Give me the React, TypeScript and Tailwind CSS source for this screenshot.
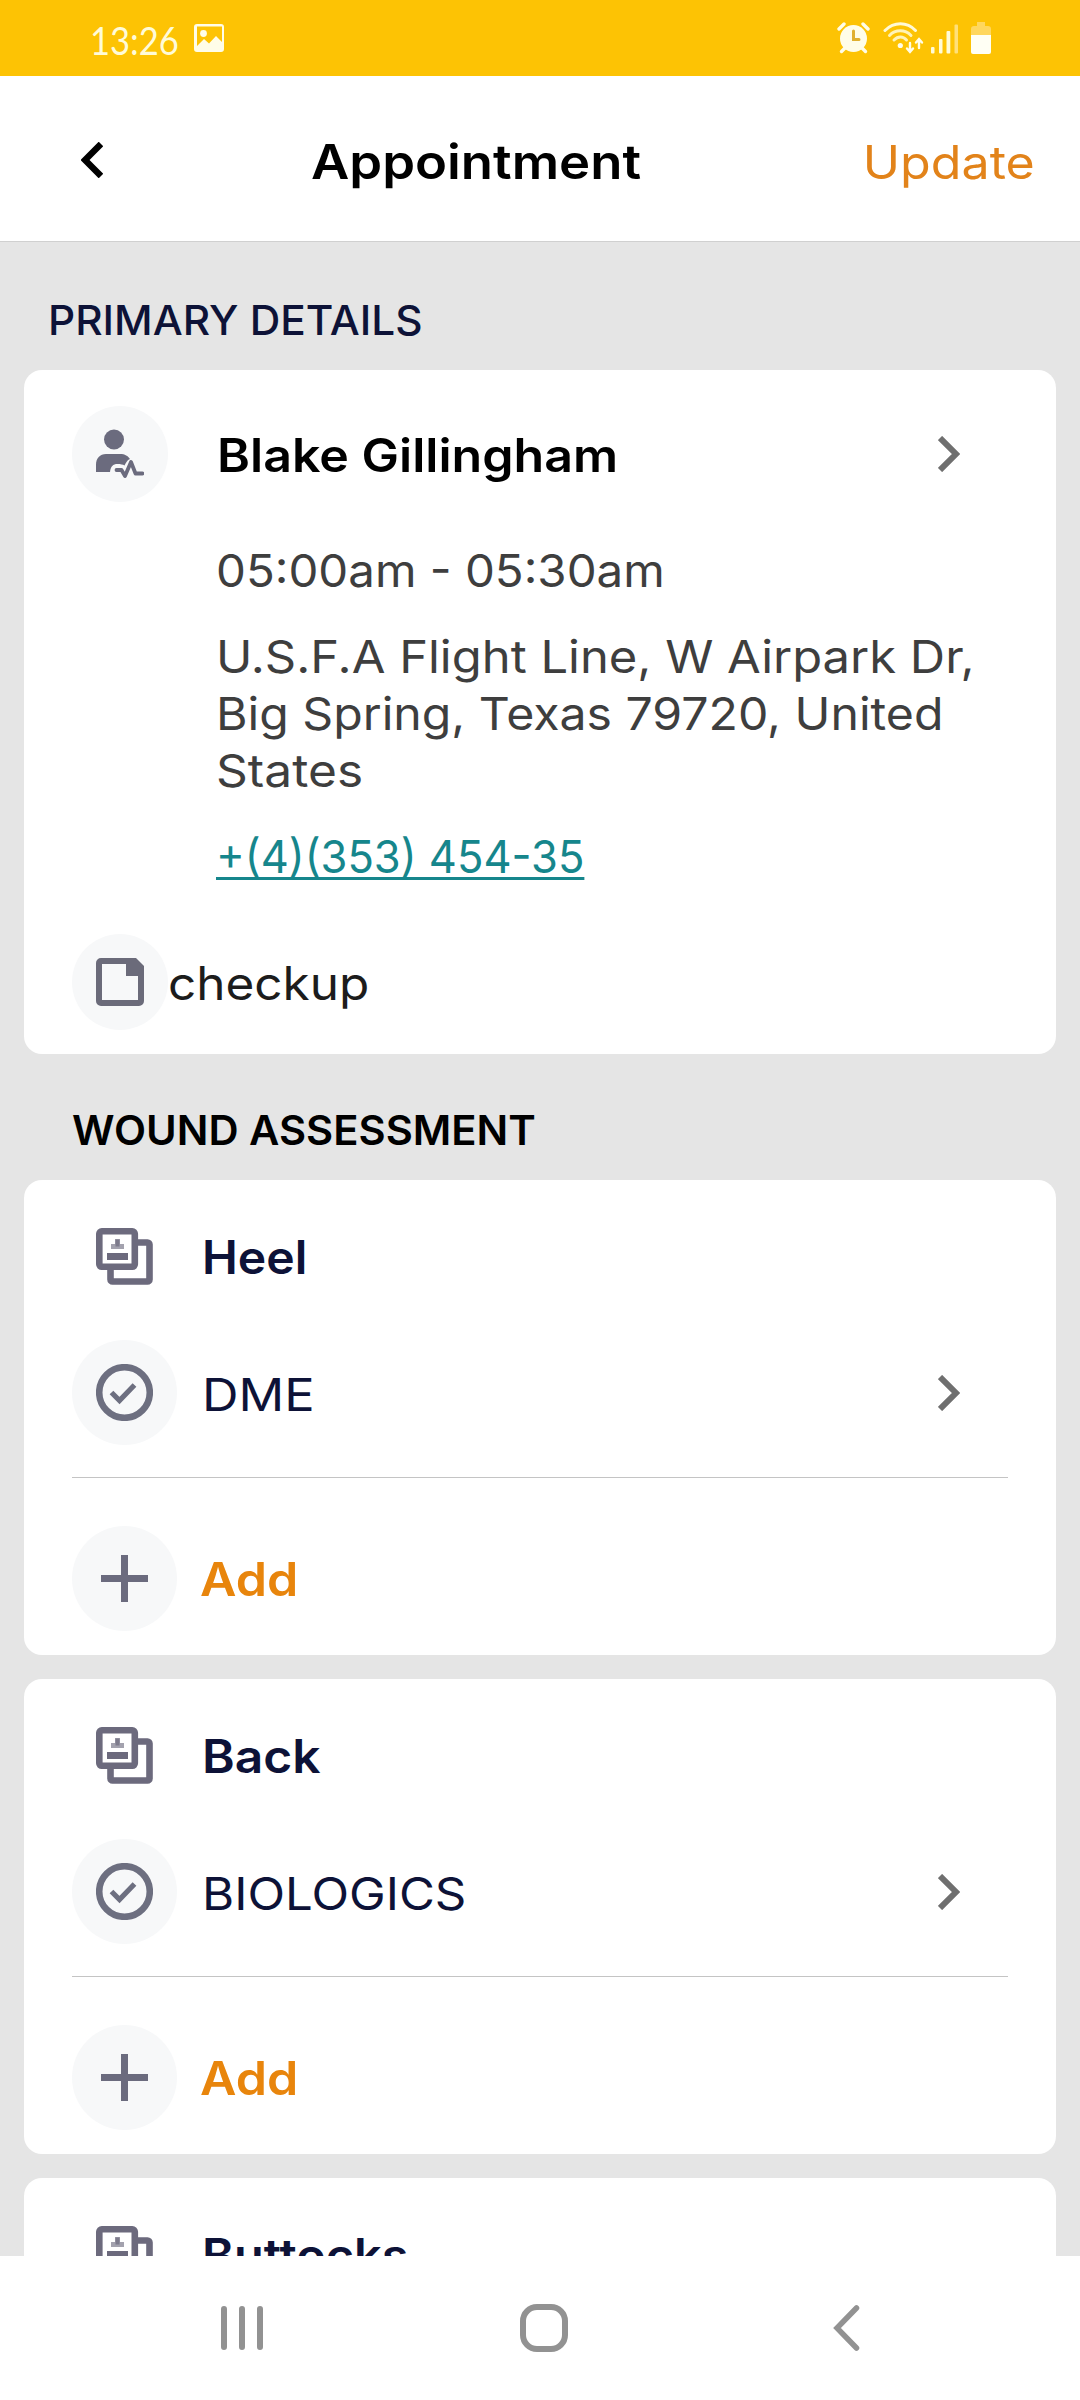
import React from 'react';

interface Wound {
  id: number;
  site: string;
  siteScale: string;
  treatment?: string;
  treatmentScale?: string;
}

// --- Data ---
const APPOINTMENT = {
  patient: 'Blake Gillingham',
  time: '05:00am - 05:30am',
  address: [
    { text: 'U.S.F.A Flight Line, W Airpark Dr,', scale: 'scale-x-[1.087]' },
    { text: 'Big Spring, Texas 79720, United', scale: 'scale-x-[1.071]' },
    { text: 'States', scale: 'scale-x-[1.103]' }
  ],
  phone: '+(4)(353) 454-35',
  note: 'checkup'
};

const WOUNDS: Wound[] = [
  { id: 1, site: 'Heel', siteScale: 'scale-x-[1.045]', treatment: 'DME', treatmentScale: 'scale-x-[1.125]' },
  { id: 2, site: 'Back', siteScale: 'scale-x-[1.08]', treatment: 'BIOLOGICS', treatmentScale: 'scale-x-[1.093]' },
  { id: 3, site: 'Buttocks', siteScale: 'scale-x-[1.057]' }
];

// --- Icons ---
const PictureIcon = () => (
  <svg width="30" height="28" viewBox="0 0 30 28" fill="none">
    <path
      fillRule="evenodd"
      fill="#fffde8"
      d="M3 0h24a3 3 0 0 1 3 3v22a3 3 0 0 1-3 3H3a3 3 0 0 1-3-3V3a3 3 0 0 1 3-3zM3 2.500V22l7-7 5 4.500 7-7.500 6 6V2.500z"
    />
    <circle cx="9.500" cy="9.500" r="3.400" fill="#fffde8" />
  </svg>
);

const AlarmIcon = () => (
  <svg width="33" height="32" viewBox="0 0 33 32" fill="none" stroke="#fffde8" strokeLinecap="round">
    <circle cx="16.500" cy="16.500" r="13.500" fill="#fffde8" stroke="none" />
    <path d="M2 7l5-5M31 7l-5-5" strokeWidth="3.400" />
    <path d="M8 26l-3.500 3.500M25 26l3.500 3.500" strokeWidth="3.400" />
    <path d="M16.500 9v8.500H22" stroke="#e0b030" strokeWidth="3" />
  </svg>
);

const WifiIcon = () => (
  <svg width="41" height="32" viewBox="0 0 41 32" fill="none" stroke="#fff3b8" strokeLinecap="round">
    <path d="M2 8.500C11-.5 24-.5 32.500 8.500" strokeWidth="3" stroke="#fff9d6" />
    <path d="M6.500 13.500c6-6.200 15.500-6.200 21.500 0" strokeWidth="3" />
    <path d="M11 18c4-4 9-4 12.500 0" strokeWidth="3" />
    <circle cx="17.300" cy="23.500" r="2.600" fill="#fffde8" stroke="none" />
    <path d="M27 21v8M24 26.500l3 3.500 3-3.500M36 26v-8M33 20.500l3-3.500 3 3.500" stroke="#fffde8" strokeWidth="2.400" />
  </svg>
);

const SignalIcon = () => (
  <svg width="28" height="30" viewBox="0 0 28 30" fill="#fffbd8">
    <rect x="0" y="23" width="3.500" height="6.500" rx="1" />
    <rect x="8" y="15" width="3.500" height="14.500" rx="1" />
    <rect x="15.500" y="7" width="3.800" height="22.500" rx="1" />
    <rect x="23.500" y="0.500" width="3.500" height="29" rx="1" fill="#ffe07a" />
  </svg>
);

const BatteryIcon = () => (
  <svg width="20" height="32" viewBox="0 0 20 32">
    <path d="M6 0h8v4h3a3 3 0 0 1 3 3v6H0V7a3 3 0 0 1 3-3h3z" fill="#ffd75e" />
    <path d="M0 13h20v17a2 2 0 0 1-2 2H2a2 2 0 0 1-2-2z" fill="#fffff4" />
  </svg>
);

const ChevronRight = () => (
  <svg width="22" height="36" viewBox="0 0 22 36" fill="none">
    <path d="M2 2l16 16L2 34" stroke="#6f6f6f" strokeWidth="6" />
  </svg>
);

const PatientIcon = () => (
  <svg width="48" height="50" viewBox="0 0 48 50" fill="none">
    <circle cx="18" cy="10.500" r="10" fill="#6b6b7e" />
    <path d="M0 43V36c0-7 4-11 10-11h14c5 0 8 2 10 5-3 1-4 4-5.500 6.500-1.500-1-4-1.500-7-1.500-4.500 0-7 2.500-7.500 8z" fill="#6b6b7e" />
    <path
      d="M20.500 41h5l3.500 6 6-14 4.500 11.500h7"
      stroke="#6b6b7e"
      strokeWidth="3.800"
      strokeLinecap="round"
      strokeLinejoin="round"
    />
  </svg>
);

const NoteIcon = () => (
  <svg width="48" height="48" viewBox="0 0 48 48">
    <path
      fillRule="evenodd"
      fill="#6b6b7a"
      d="M5 0h35l8 8v35a5 5 0 0 1-5 5H5a5 5 0 0 1-5-5V5a5 5 0 0 1 5-5zM6 6v36h36V18H30V6z"
    />
  </svg>
);

const RecordsIcon = () => (
  <svg width="57" height="57" viewBox="0 0 57 57" fill="none" stroke="#6c6a7d">
    <rect x="3.300" y="3.300" width="35.500" height="35.500" rx="2.500" strokeWidth="6.600" />
    <path d="M42 14.500h9.500a2 2 0 0 1 2 2v35a2 2 0 0 1-2 2h-35a2 2 0 0 1-2-2V42" strokeWidth="6.600" />
    <path d="M11 25h21v7H11z" fill="#6c6a7d" stroke="none" />
    <path d="M19 11h5v5h4v5H15v-5h4z" fill="#a3a2ae" stroke="none" />
    <path d="M19.500 11.500h4v7h-4z" fill="#7d7b8c" stroke="none" />
  </svg>
);

const CheckIcon = () => (
  <svg width="57" height="57" viewBox="0 0 57 57" fill="none" stroke="#6d6f80">
    <circle cx="28.500" cy="28.500" r="25.300" strokeWidth="6.600" />
    <path d="M15.500 28.500l8 8 15-15.500" strokeWidth="5.200" />
  </svg>
);

const PlusIcon = () => (
  <svg width="47" height="47" viewBox="0 0 47 47" fill="none" stroke="#6b6b7e" strokeWidth="7">
    <path d="M23.500 0v47M0 23.500h47" />
  </svg>
);

// --- Sections ---
const StatusBar = () => (
  <div className="h-[76px] shrink-0 bg-[#fdc304] flex items-center justify-between pl-[90px] pr-[89px]">
    <div className="flex items-center">
      <span className="w-[104px] pt-1 text-[38px] leading-none text-[#fffbd8] font-[Lato]">
        <span className="inline-block origin-left scale-x-[0.91]">13:26</span>
      </span>
      <PictureIcon />
    </div>
    <div className="flex items-center">
      <AlarmIcon />
      <div className="ml-[13px]"><WifiIcon /></div>
      <div className="ml-[7px] pt-[2px]"><SignalIcon /></div>
      <div className="ml-3"><BatteryIcon /></div>
    </div>
  </div>
);

const Header = () => (
  <header className="h-[165px] shrink-0 bg-white flex items-center pl-[81px] pr-[45px]">
    <svg width="22" height="36" viewBox="0 0 22 36" fill="none" className="mt-0.5">
      <path d="M20 2L4 18l16 16" stroke="#000" strokeWidth="6.500" />
    </svg>
    <h1 className="ml-[208px] pt-[6px] text-[48px] font-semibold text-black origin-left scale-x-[1.097]">Appointment</h1>
    <button className="ml-auto pt-[7px] text-[46px] text-[#e2831a] origin-right scale-x-[1.09]">Update</button>
  </header>
);

const PrimaryDetails = () => (
  <section className="h-[684px] shrink-0 mx-6 rounded-[18px] bg-white pt-9 px-12">
    <div className="h-24 flex items-center">
      <div className="size-24 rounded-full bg-[#f7f8f9] flex items-center justify-center">
        <PatientIcon />
      </div>
      <h3 className="ml-[49px] pt-[2px] text-[46px] font-semibold text-black origin-left scale-x-[1.089]">{APPOINTMENT.patient}</h3>
      <div className="ml-auto mr-12"><ChevronRight /></div>
    </div>

    <div className="ml-[144px] mt-10 text-[45px] leading-[57px] text-[#3e3e3e] whitespace-nowrap">
      <p className="origin-left scale-x-[1.054]">{APPOINTMENT.time}</p>
      <p className="mt-[29px]">
        {APPOINTMENT.address.map(line => (
          <span key={line.text} className={`block origin-left ${line.scale}`}>{line.text}</span>
        ))}
      </p>
      <p className="mt-[29px] origin-left scale-x-[0.967]">
        <a className="text-[#16868c] underline decoration-[3px] underline-offset-[4px] [text-decoration-skip-ink:none]">
          {APPOINTMENT.phone}
        </a>
      </p>
    </div>

    <div className="h-24 mt-[49px] flex items-center">
      <div className="size-24 rounded-full bg-[#f7f8f9] flex items-center justify-center">
        <NoteIcon />
      </div>
      <span className="pt-[3px] text-[46px] text-[#1c1c1c] origin-left scale-x-[1.075]">{APPOINTMENT.note}</span>
    </div>
  </section>
);

const WoundCard = ({ wound }: { wound: Wound }) => (
  <section className="shrink-0 mx-6 rounded-[18px] bg-white py-6 px-12">
    <div className="h-[105px] flex items-center">
      <div className="w-[105px] flex justify-center"><RecordsIcon /></div>
      <h3 className={`ml-[25px] pt-px text-[46px] font-semibold text-[#0d1237] origin-left ${wound.siteScale}`}>{wound.site}</h3>
    </div>

    {wound.treatment && (
      <>
        <div className="mt-[31px] h-[105px] flex items-center">
          <div className="size-[105px] rounded-full bg-[#f7f8f9] flex items-center justify-center">
            <CheckIcon />
          </div>
          <span className={`ml-[25px] pt-[4px] text-[45px] text-[#0d1237] origin-left ${wound.treatmentScale}`}>{wound.treatment}</span>
          <div className="ml-auto mr-12"><ChevronRight /></div>
        </div>

        <div className="mt-8 h-px bg-[#c4c4c4]" />

        <div className="mt-12 h-[105px] flex items-center">
          <div className="size-[105px] rounded-full bg-[#f7f8f9] flex items-center justify-center">
            <PlusIcon />
          </div>
          <button className="ml-[23px] pt-[2px] text-[46px] font-semibold text-[#e8850c] origin-left scale-x-[1.09]">Add</button>
        </div>
      </>
    )}
  </section>
);

const NavBar = () => (
  <nav className="h-36 shrink-0 bg-white flex items-center justify-between pl-[221px] pr-[220px]">
    <svg width="42" height="46" viewBox="0 0 42 46" stroke="#929292" strokeWidth="6" strokeLinecap="round">
      <path d="M3 4v38M21 4v38M39 4v38" />
    </svg>
    <svg width="48" height="48" viewBox="0 0 48 48" fill="none" className="-ml-[9px]">
      <rect x="3" y="3" width="42" height="42" rx="14" stroke="#929292" strokeWidth="6" />
    </svg>
    <svg width="27" height="46" viewBox="0 0 27 46" fill="none">
      <path d="M23.500 3L4 23l19.500 20" stroke="#929292" strokeWidth="5.500" strokeLinecap="round" />
    </svg>
  </nav>
);

const App: React.FC = () => {
  return (
    <div className="w-[1080px] h-[2400px] overflow-hidden bg-[#e5e5e5] flex flex-col font-[Inter,sans-serif]">
      <StatusBar />
      <Header />

      <main className="flex-1 min-h-0 overflow-hidden flex flex-col border-t border-[#d0d0d0]">
        <h2 className="h-32 shrink-0 flex items-center pt-[30px] ml-12 text-[41px] font-medium text-[#0d1237] origin-left scale-x-[1.032]">
          PRIMARY DETAILS
        </h2>
        <PrimaryDetails />

        <h2 className="h-[126px] shrink-0 flex items-center pt-[28px] ml-[72px] text-[41px] font-semibold text-black origin-left scale-x-[1.018]">
          WOUND ASSESSMENT
        </h2>
        <div className="flex flex-col gap-6">
          {WOUNDS.map(wound => (
            <WoundCard key={wound.id} wound={wound} />
          ))}
        </div>
      </main>

      <NavBar />
    </div>
  );
};

export default App;
